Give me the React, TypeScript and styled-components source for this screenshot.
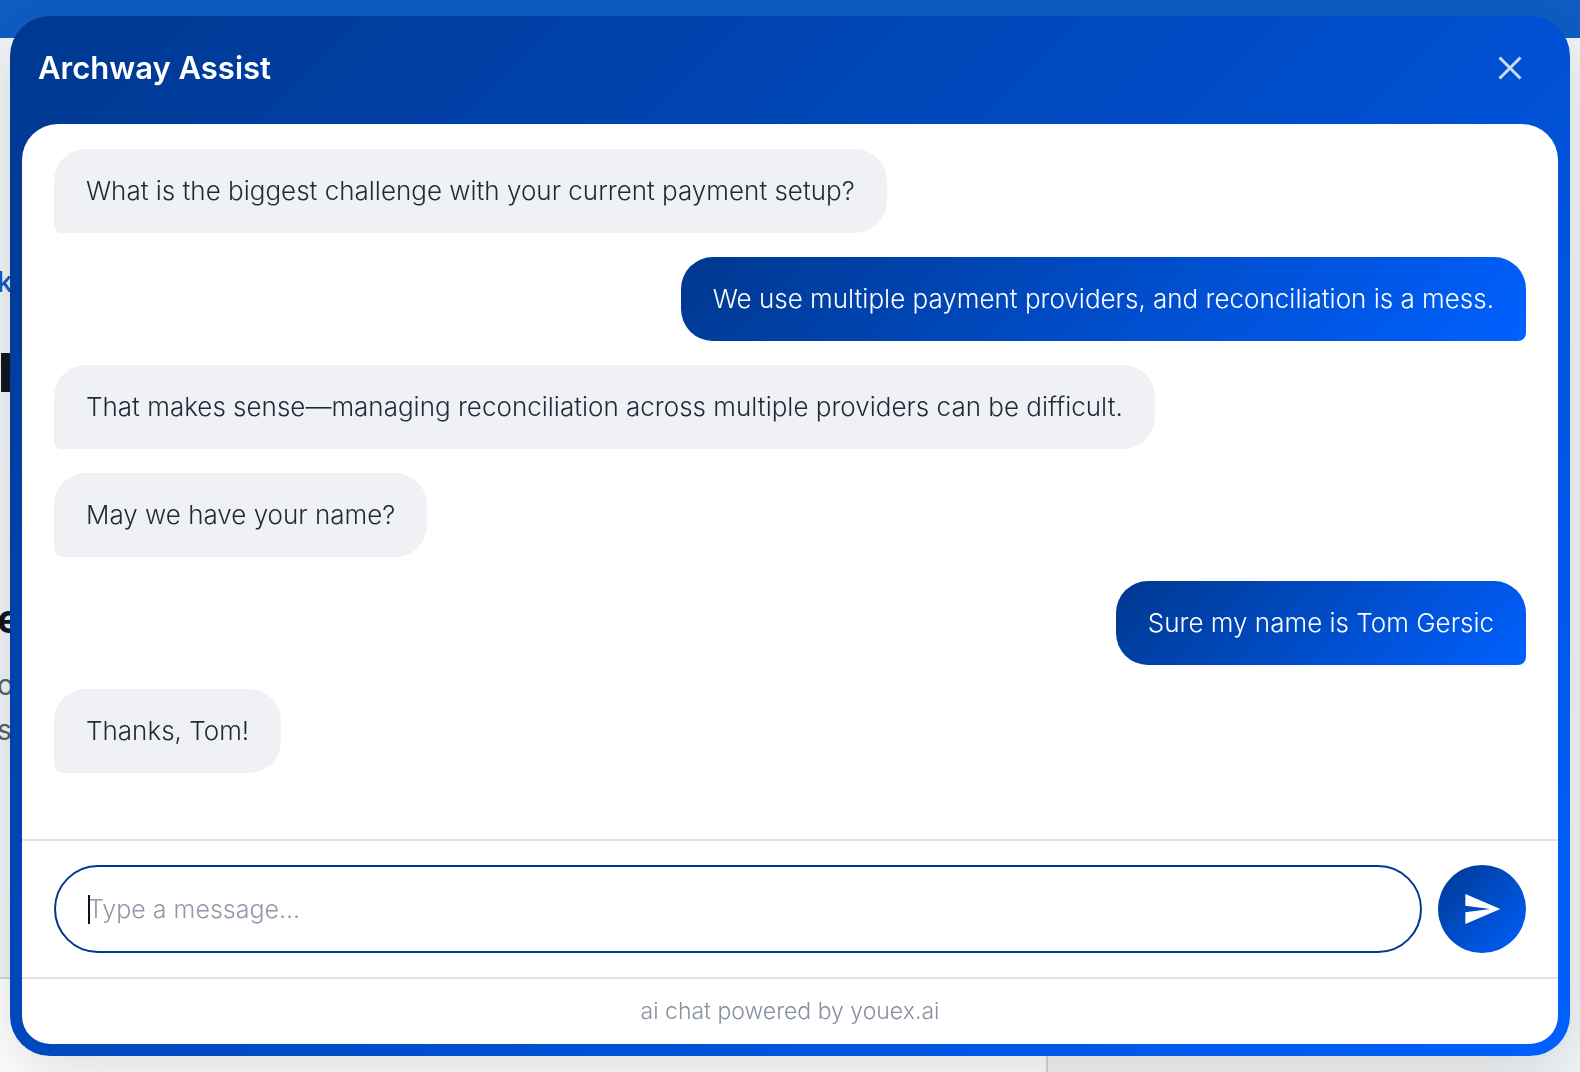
import React from "react";
import styled, { createGlobalStyle } from "styled-components";

const brandGradient = "linear-gradient(135deg, #00388f 0%, #0060ff 100%)";
const divider = "2px solid #e2e3e8";

const GlobalStyle = createGlobalStyle`
  *, *::before, *::after { box-sizing: border-box; }
  body {
    margin: 0;
    background: #f3f6f8;
    font-family: Inter, "Liberation Sans", sans-serif;
    color: #1f2937;
    overflow: hidden;
  }
  p, h1, h2, ul { margin: 0; padding: 0; }
`;

/* ---- page behind the chat ---- */

const Page = styled.div`
  display: flex;
  flex-direction: column;
  height: 100vh;
`;

const TopBar = styled.div`
  flex: none;
  height: 38px;
  background: #0f5dc4;
`;

const Article = styled.main`
  flex: 1;
  min-height: 0;
  margin-left: -3px;
  padding-top: 224px;
`;

const Eyebrow = styled.p`
  font-size: 28px;
  line-height: 40px;
  font-weight: 500;
  color: #0f5dc4;
`;

const Headline = styled.h1`
  padding-top: 20px;
  font-size: 72px;
  line-height: 88px;
  font-weight: 800;
  color: #111820;
`;

const Subhead = styled.h2`
  padding-top: 181px;
  font-size: 40px;
  line-height: 56px;
  font-weight: 700;
  color: #111820;
`;

const Copy = styled.p`
  padding-top: 16px;
  font-size: 28px;
  line-height: 45px;
  color: #56606c;
`;

const LowerRow = styled.div`
  flex: none;
  display: grid;
  grid-template-columns: 1048px 1fr;
  height: 95px;
`;

const LowerCard = styled.div`
  background: #ffffff;
  border-top: 2px solid #d3d9de;
  border-right: 2px solid #d3d9de;
`;

/* ---- chat dialog ---- */

const Dialog = styled.section`
  position: fixed;
  inset: 16px 10px;
  display: flex;
  flex-direction: column;
  padding: 0 12px 12px;
  border-radius: 40px;
  background: ${brandGradient};
  box-shadow: 0 16px 64px rgba(0, 0, 0, 0.14);
`;

const Header = styled.header`
  flex: none;
  display: flex;
  align-items: center;
  justify-content: space-between;
  height: 108px;
  padding: 0 28px 4px 16px;
`;

const Title = styled.h1`
  font-size: 31px;
  line-height: 40px;
  font-weight: 600;
  color: #ffffff;
`;

const CloseButton = styled.button`
  display: grid;
  place-items: center;
  width: 40px;
  height: 40px;
  padding: 0;
  border: 0;
  background: none;
  color: rgba(255, 255, 255, 0.8);
  cursor: pointer;
`;

const Panel = styled.div`
  flex: 1;
  min-height: 0;
  display: flex;
  flex-direction: column;
  overflow: hidden;
  border-radius: 36px 36px 28px 28px;
  background: #ffffff;
`;

const Messages = styled.ul`
  flex: 1;
  min-height: 0;
  display: flex;
  flex-direction: column;
  gap: 24px;
  padding: 25px 32px;
  overflow: hidden;
  list-style: none;
`;

const Bubble = styled.li<{ $mine: boolean }>`
  flex: none;
  align-self: ${(p) => (p.$mine ? "flex-end" : "flex-start")};
  padding: 24px 32px;
  border-radius: ${(p) => (p.$mine ? "32px 32px 8px 32px" : "32px 32px 32px 8px")};
  background: ${(p) => (p.$mine ? brandGradient : "#f0f1f5")};
  color: ${(p) => (p.$mine ? "#ffffff" : "#1f2937")};
  font-size: 26px;
  line-height: 36px;
  font-weight: 300;
`;

const Composer = styled.form`
  flex: none;
  display: flex;
  gap: 16px;
  padding: 24px 32px;
  border-top: ${divider};
`;

const Field = styled.label`
  position: relative;
  flex: 1;
  display: flex;
`;

const Input = styled.input`
  flex: 1;
  min-width: 0;
  height: 88px;
  padding: 0 32px;
  border: 2px solid #00388f;
  border-radius: 44px;
  outline: none;
  background: #ffffff;
  font: inherit;
  font-size: 25px;
  font-weight: 300;
  color: #1f2937;
  caret-color: transparent;
  &::placeholder { color: #9099a8; opacity: 1; }
`;

const Caret = styled.span`
  position: absolute;
  left: 34px;
  top: 30px;
  width: 2px;
  height: 29px;
  background: #0b1020;
`;

const SendButton = styled.button`
  display: grid;
  place-items: center;
  width: 88px;
  height: 88px;
  padding: 0;
  border: 0;
  border-radius: 50%;
  background: ${brandGradient};
  color: #ffffff;
  cursor: pointer;
`;

const Footer = styled.footer`
  flex: none;
  padding: 16px 0 17px;
  border-top: ${divider};
  font-size: 23px;
  line-height: 32px;
  font-weight: 300;
  text-align: center;
  color: #8790a0;
`;

const messages = [
  { mine: false, text: "What is the biggest challenge with your current payment setup?" },
  { mine: true, text: "We use multiple payment providers, and reconciliation is a mess." },
  { mine: false, text: "That makes sense—managing reconciliation across multiple providers can be difficult." },
  { mine: false, text: "May we have your name?" },
  { mine: true, text: "Sure my name is Tom Gersic" },
  { mine: false, text: "Thanks, Tom!" },
];

export default function App() {
  return (
    <>
      <GlobalStyle />
      <Page>
        <TopBar />
        <Article>
          <Eyebrow>k</Eyebrow>
          <Headline>r</Headline>
          <Subhead>e</Subhead>
          <Copy>
            o<br />s
          </Copy>
        </Article>
        <LowerRow>
          <LowerCard />
        </LowerRow>
      </Page>

      <Dialog role="dialog" aria-labelledby="chat-title">
        <Header>
          <Title id="chat-title">Archway Assist</Title>
          <CloseButton type="button" aria-label="Close">
            <svg width="24" height="24" viewBox="0 0 24 24" fill="none" stroke="currentColor" strokeWidth="3">
              <path d="M1.5 1.5l21 21M22.5 1.5l-21 21" />
            </svg>
          </CloseButton>
        </Header>
        <Panel>
          <Messages>
            {messages.map((m) => (
              <Bubble key={m.text} $mine={m.mine}>
                {m.text}
              </Bubble>
            ))}
          </Messages>
          <Composer onSubmit={(e) => e.preventDefault()}>
            <Field>
              <Input type="text" aria-label="Message" placeholder="Type a message..." />
              <Caret />
            </Field>
            <SendButton type="submit" aria-label="Send">
              <svg width="40" height="40" viewBox="0 0 24 24" fill="currentColor">
                <path d="M2.01 21L23 12 2.01 3 2 10l15 2-15 2z" />
              </svg>
            </SendButton>
          </Composer>
          <Footer>ai chat powered by youex.ai</Footer>
        </Panel>
      </Dialog>
    </>
  );
}
